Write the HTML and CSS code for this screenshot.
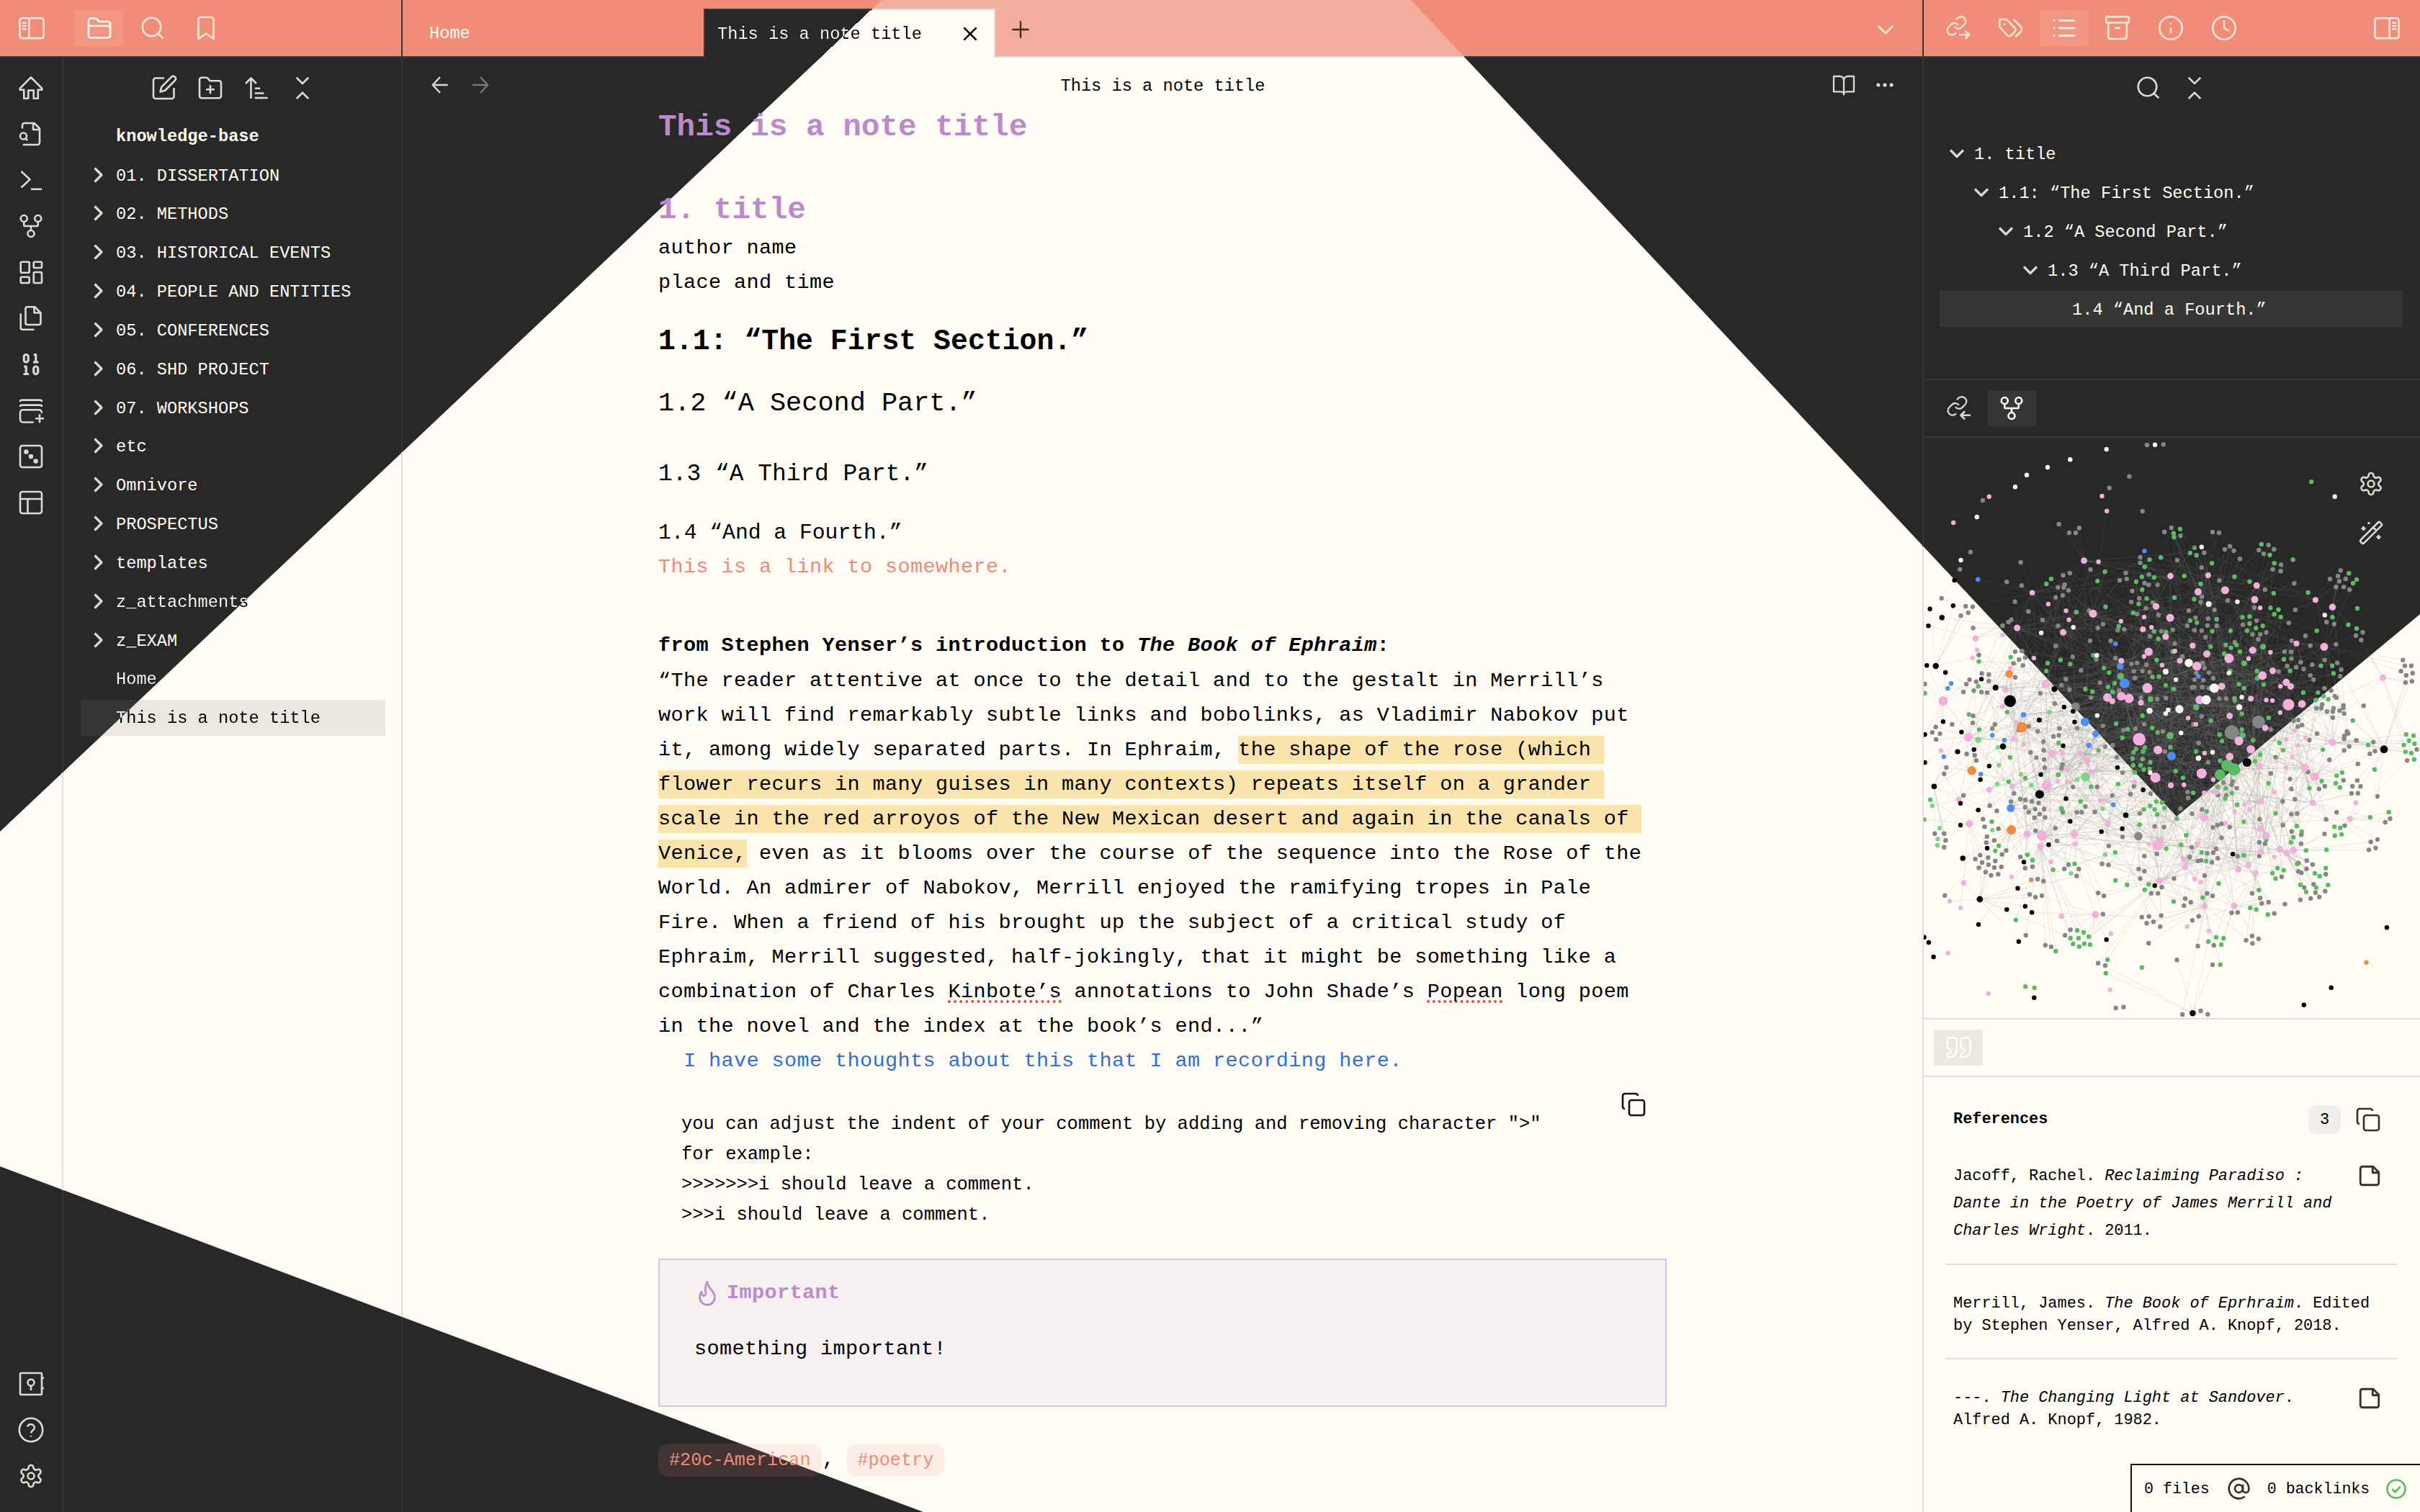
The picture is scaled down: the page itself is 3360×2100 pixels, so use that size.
FILE: index.html
```html
<!DOCTYPE html>
<html lang="en">
<head>
<meta charset="utf-8">
<title>This is a note title</title>
<link rel="stylesheet" href="styles.css">
</head>
<body>
<svg class="sprite" aria-hidden="true">
  <symbol id="panel-left" viewBox="0 0 24 24"><rect x="1" y="2.8" width="22" height="18.6" rx="2"/><path d="M9.6 2.8v18.6M3.2 7.2h4M3.2 10h4M3.2 12.8h4"/></symbol>
  <symbol id="panel-right" viewBox="0 0 24 24"><rect x="1" y="2.8" width="22" height="18.6" rx="2"/><path d="M14.4 2.8v18.6M16.8 7.2h4M16.8 10h4M16.8 12.8h4"/></symbol>
  <symbol id="folder" viewBox="0 0 24 24"><path d="M22 19a2 2 0 0 1-2 2H4a2 2 0 0 1-2-2V5a2 2 0 0 1 2-2h4.200c.7 0 1.300.3 1.700.9l.9 1.200c.4.600 1 .9 1.700.9H20a2 2 0 0 1 2 2zM2 10h20"/></symbol>
  <symbol id="search" viewBox="0 0 24 24"><circle cx="11" cy="11" r="8.500"/><path d="m21.500 21.500-4.500-4.500"/></symbol>
  <symbol id="bookmark" viewBox="0 0 24 24"><path d="m19 22-7-5-7 5V4a2 2 0 0 1 2-2h10a2 2 0 0 1 2 2z"/></symbol>
  <symbol id="home" viewBox="0 0 24 24"><path d="M12 2.200 1.800 12.500v1.300H5.500v8h4v-7.500h5v7.500h4v-8h3.700v-1.300z"/></symbol>
  <symbol id="file-search" viewBox="0 0 24 24"><path d="M4.500 22H18a2 2 0 0 0 2-2V7l-5-5H6a2 2 0 0 0-2 2v3M14 2v6h6M8.800 18l-1.600-1.600"/><circle cx="5" cy="14" r="3"/></symbol>
  <symbol id="terminal" viewBox="0 0 24 24"><path d="m3 19 8-7.500L3 4M12 20.500h10"/></symbol>
  <symbol id="fork" viewBox="0 0 24 24"><circle cx="12" cy="19" r="3"/><circle cx="5.500" cy="5" r="3"/><circle cx="18.500" cy="5" r="3"/><path d="M18.500 8v3c0 .6-.4 1-1 1h-11c-.6 0-1-.4-1-1V8M12 12v4"/></symbol>
  <symbol id="dashboard" viewBox="0 0 24 24"><rect x="2.500" y="2.500" width="8" height="10" rx="1"/><rect x="14.500" y="2.500" width="7.500" height="5.500" rx="1"/><rect x="14.500" y="12" width="7.500" height="10" rx="1"/><rect x="2.500" y="16.500" width="8" height="5.500" rx="1"/></symbol>
  <symbol id="files" viewBox="0 0 24 24"><path d="M15.500 1.500H8.600C7.700 1.500 7 2.200 7 3.100v13.300c0 .9.700 1.600 1.600 1.600h10.800c.9 0 1.600-.7 1.600-1.600V7zM2.500 7.600v13.300c0 .9.700 1.600 1.600 1.600H15M15 1.500V7h6"/></symbol>
  <symbol id="binary" viewBox="0 0 24 24"><rect x="14.500" y="14" width="4" height="7" rx="2"/><rect x="5.500" y="3" width="4" height="7" rx="2"/><path d="M5 21h5M14 10h5M5.500 14h2v7M14.500 3h2v7"/></symbol>
  <symbol id="stack-plus" viewBox="0 0 24 24"><path d="M2 4c0-1 .6-1.600 1.600-1.600h16.800c1 0 1.600.6 1.600 1.600M2 8.700c0-1 .6-1.600 1.600-1.600h16.800c1 0 1.600.6 1.600 1.600M14.500 23H4.500A2.500 2.500 0 0 1 2 20.500v-6.500a2.500 2.500 0 0 1 2.500-2.500h15A2.500 2.500 0 0 1 22 14v.5M20 15.500v8M16 19.500h8"/></symbol>
  <symbol id="dice" viewBox="0 0 24 24"><rect x="2" y="2" width="20" height="20" rx="2"/><g class="solid"><circle cx="7.600" cy="7.600" r="1.300"/><circle cx="12" cy="12" r="1.300"/><circle cx="16.400" cy="16.400" r="1.300"/></g></symbol>
  <symbol id="layout" viewBox="0 0 24 24"><rect x="2" y="2" width="20" height="20" rx="2"/><path d="M2 8.700h20M9 22V8.700"/></symbol>
  <symbol id="vault" viewBox="0 0 24 24"><rect x="2" y="2" width="20" height="20" rx="1"/><circle cx="12" cy="10.800" r="3"/><path d="M12 14v4M22 6.500h2M22 16h2"/></symbol>
  <symbol id="help" viewBox="0 0 24 24"><circle cx="12" cy="12" r="10.800"/><path d="M8.800 9a3.300 3.300 0 0 1 6.400 1c0 2.200-3.200 2.800-3.200 5M12 17.300v1"/></symbol>
  <symbol id="gear" viewBox="0 0 24 24"><path d="M12.220 2h-.44a2 2 0 0 0-2 2v.18a2 2 0 0 1-1 1.730l-.43.25a2 2 0 0 1-2 0l-.15-.08a2 2 0 0 0-2.730.73l-.22.38a2 2 0 0 0 .73 2.730l.15.1a2 2 0 0 1 1 1.720v.51a2 2 0 0 1-1 1.740l-.15.09a2 2 0 0 0-.73 2.730l.22.38a2 2 0 0 0 2.730.73l.15-.08a2 2 0 0 1 2 0l.43.25a2 2 0 0 1 1 1.730V20a2 2 0 0 0 2 2h.44a2 2 0 0 0 2-2v-.18a2 2 0 0 1 1-1.730l.43-.25a2 2 0 0 1 2 0l.15.08a2 2 0 0 0 2.730-.73l.22-.39a2 2 0 0 0-.73-2.730l-.15-.08a2 2 0 0 1-1-1.740v-.5a2 2 0 0 1 1-1.740l.15-.09a2 2 0 0 0 .73-2.730l-.22-.38a2 2 0 0 0-2.730-.73l-.15.08a2 2 0 0 1-2 0l-.43-.25a2 2 0 0 1-1-1.730V4a2 2 0 0 0-2-2z"/><circle cx="12" cy="12" r="3"/></symbol>
  <symbol id="edit" viewBox="0 0 24 24"><path d="M12 3H4a2 2 0 0 0-2 2v15a2 2 0 0 0 2 2h15a2 2 0 0 0 2-2v-8M18.700 1.900a2.300 2.300 0 0 1 3.300 3.300L12.700 14.500l-4.300 1.100 1.100-4.400z"/></symbol>
  <symbol id="folder-plus" viewBox="0 0 24 24"><path d="M22 19.500a2 2 0 0 1-2 2H4a2 2 0 0 1-2-2v-15a2 2 0 0 1 2-2h4.200c.7 0 1.300.3 1.700.9l.9 1.200c.4.600 1 .9 1.700.9H20a2 2 0 0 1 2 2zM12 9.500v8M8 13.500h8"/></symbol>
  <symbol id="sort" viewBox="0 0 24 24"><path d="m2 8 5-5 5 5M7 3v19M10.500 12.500h5M10.500 17h8.500M10.500 21.300h12"/></symbol>
  <symbol id="collapse" viewBox="0 0 24 24"><path d="m6.500 22 5.500-5.500 5.500 5.500M6.500 2.500 12 8l5.500-5.500"/></symbol>
  <symbol id="chevron-right" viewBox="0 0 24 24"><path d="m6.500 2.500 9.500 9.500-9.500 9.500"/></symbol>
  <symbol id="chevron-down" viewBox="0 0 24 24"><path d="m3 7.500 9 9 9-9"/></symbol>
  <symbol id="close" viewBox="0 0 24 24"><path d="M4 4l16 16M20 4 4 20"/></symbol>
  <symbol id="plus" viewBox="0 0 24 24"><path d="M12 2v20M2 12h20"/></symbol>
  <symbol id="arrow-left" viewBox="0 0 24 24"><path d="M22 12H2.500M12 2l-9.500 10L12 22"/></symbol>
  <symbol id="arrow-right" viewBox="0 0 24 24"><path d="M2 12h19.500M12 2l9.500 10L12 22"/></symbol>
  <symbol id="book" viewBox="0 0 24 24"><path d="M1.500 3h6.500a4 4 0 0 1 4 4v15a3 3 0 0 0-3-3H1.500zM22.500 3H16a4 4 0 0 0-4 4v15a3 3 0 0 1 3-3h7.500z"/></symbol>
  <symbol id="dots" viewBox="0 0 24 24"><g class="solid"><circle cx="3.500" cy="12" r="1.300"/><circle cx="12" cy="12" r="1.300"/><circle cx="20.500" cy="12" r="1.300"/></g></symbol>
  <symbol id="link-out" viewBox="0 0 24 24"><path transform="translate(.6 -.4) scale(.86)" d="M10 13a5 5 0 0 0 7.540.54l3-3a5 5 0 0 0-7.070-7.070l-1.720 1.710M14 11a5 5 0 0 0-7.540-.54l-3 3a5 5 0 0 0 7.070 7.070l1.200-1.200"/><path d="M13.500 18.200h9M19 14.500l3.700 3.700-3.700 3.700"/></symbol>
  <symbol id="link-in" viewBox="0 0 24 24"><path transform="translate(.6 -.4) scale(.86)" d="M10 13a5 5 0 0 0 7.540.54l3-3a5 5 0 0 0-7.070-7.070l-1.720 1.710M14 11a5 5 0 0 0-7.540-.54l-3 3a5 5 0 0 0 7.070 7.070l.4-.4"/><path d="M14.300 18.500h9M18 14.800l-3.700 3.700 3.700 3.700"/></symbol>
  <symbol id="tags" viewBox="0 0 24 24"><path d="m14.500 4 6.300 6.300a4 4 0 0 1 0 5.400L16.300 20M8.600 4.600A2 2 0 0 0 7.200 4H1.500v6.200a2 2 0 0 0 .6 1.400l6.800 7.300a2.300 2.300 0 0 0 3.200 0l3.600-3.800a2.300 2.300 0 0 0 0-3.200zM5.200 8.500h1.500"/></symbol>
  <symbol id="list" viewBox="0 0 24 24"><path d="M7 5h15M7 12h15M7 19h15M2 5h1.500M2 12h1.500M2 19h1.500"/></symbol>
  <symbol id="archive" viewBox="0 0 24 24"><rect x="1.500" y="1.500" width="21" height="5.500" rx="1"/><path d="M3.500 7v13a2 2 0 0 0 2 2h13a2 2 0 0 0 2-2V7M9.500 12h5"/></symbol>
  <symbol id="info" viewBox="0 0 24 24"><circle cx="12" cy="12" r="10.500"/><path d="M12 17v-5.500M12 7v1.500"/></symbol>
  <symbol id="clock" viewBox="0 0 24 24"><circle cx="12" cy="12" r="10.500"/><path d="M12 5v7l4.500 2.800"/></symbol>
  <symbol id="wand" viewBox="0 0 24 24"><path d="m21.600 3.600-1.300-1.300a1.200 1.200 0 0 0-1.700 0L2.400 18.600a1.200 1.200 0 0 0 0 1.700l1.300 1.300c.5.500 1.200.5 1.700 0L21.600 5.400a1.200 1.200 0 0 0 0-1.800M14 7l3 3M5 6v4M19 14v4M10 2v2M7 8H3M21 16h-4M11 3H9"/></symbol>
  <symbol id="quote" viewBox="0 0 24 24"><path d="M3 21c3.500 0 7.500-1 7.500-8V5c0-1.200-.8-2-2-2H4c-1.300 0-2 .8-2 2v6c0 1.300.8 2 2 2 1 0 1 0 1 1v1c0 1-1 2-2 2s-1 0-1 1v2c0 1 0 1 1 1M15.500 21c3.500 0 7.500-1 7.500-8V5c0-1.200-.8-2-2-2h-4.500c-1.300 0-2 .8-2 2v6c0 1.300.8 2 2 2 1 0 1 0 1 1v1c0 1-1 2-2 2s-1 0-1 1v2c0 1 0 1 1 1"/></symbol>
  <symbol id="copy" viewBox="0 0 24 24"><rect x="8" y="8" width="14" height="14" rx="2"/><path d="M4 16c-1.100 0-2-.9-2-2V4c0-1.100.9-2 2-2h10c1.100 0 2 .9 2 2"/></symbol>
  <symbol id="note" viewBox="0 0 24 24"><path d="M15.500 3H5a2 2 0 0 0-2 2v14a2 2 0 0 0 2 2h14a2 2 0 0 0 2-2V8.500zM15 3v6h6"/></symbol>
  <symbol id="flame" viewBox="0 0 24 24"><path d="M12 1.500c.3 3 1.300 4.700 3.300 7C17.600 11 19 12.800 19 16a7 6.800 0 0 1-14 0c0-2 .6-4 1.800-5.300.2 2 .5 3.800 2 3.800 1.600 0 2-1.400 1.700-3.200C10 8 10 4.500 12 1.500z"/></symbol>
  <symbol id="at" viewBox="0 0 24 24"><circle cx="12" cy="12" r="4"/><path d="M16 8v5a3 3 0 0 0 6 0v-1a10 10 0 1 0-4 8"/></symbol>
  <symbol id="check" viewBox="0 0 24 24"><circle cx="12" cy="12" r="10"/><path d="m7.500 12.200 3.200 3.200 5.800-5.800"/></symbol>
</svg>

<div class="app">
  <header class="topbar">
    <div class="top-left">
      <svg class="icon toggle"><use href="#panel-left"/></svg>
      <nav class="top-tabs">
        <span class="tool active"><svg class="icon"><use href="#folder"/></svg></span>
        <span class="tool"><svg class="icon"><use href="#search"/></svg></span>
        <span class="tool"><svg class="icon"><use href="#bookmark"/></svg></span>
      </nav>
    </div>
    <div class="top-center">
      <div class="tab">Home</div>
      <div class="tab tab-active"><span class="split">This is a note title</span><svg class="icon tab-close"><use href="#close"/></svg></div>
      <svg class="icon new-tab"><use href="#plus"/></svg>
      <svg class="icon tab-menu"><use href="#chevron-down"/></svg>
    </div>
    <div class="top-right">
      <nav class="top-tabs">
        <span class="tool"><svg class="icon"><use href="#link-out"/></svg></span>
        <span class="tool"><svg class="icon"><use href="#tags"/></svg></span>
        <span class="tool active"><svg class="icon"><use href="#list"/></svg></span>
        <span class="tool"><svg class="icon"><use href="#archive"/></svg></span>
        <span class="tool"><svg class="icon"><use href="#info"/></svg></span>
        <span class="tool"><svg class="icon"><use href="#clock"/></svg></span>
      </nav>
      <svg class="icon toggle"><use href="#panel-right"/></svg>
    </div>
  </header>

  <div class="workspace">
    <aside class="ribbon">
      <div class="ribbon-group">
        <svg class="icon"><use href="#home"/></svg>
        <svg class="icon"><use href="#file-search"/></svg>
        <svg class="icon"><use href="#terminal"/></svg>
        <svg class="icon"><use href="#fork"/></svg>
        <svg class="icon"><use href="#dashboard"/></svg>
        <svg class="icon"><use href="#files"/></svg>
        <svg class="icon binary"><use href="#binary"/></svg>
        <svg class="icon"><use href="#stack-plus"/></svg>
        <svg class="icon"><use href="#dice"/></svg>
        <svg class="icon"><use href="#layout"/></svg>
      </div>
      <div class="ribbon-group">
        <svg class="icon"><use href="#vault"/></svg>
        <svg class="icon"><use href="#help"/></svg>
        <svg class="icon"><use href="#gear"/></svg>
      </div>
    </aside>
    <div class="rule rule-ribbon"></div>

    <aside class="explorer">
      <div class="explorer-tools">
        <svg class="icon"><use href="#edit"/></svg>
        <svg class="icon"><use href="#folder-plus"/></svg>
        <svg class="icon"><use href="#sort"/></svg>
        <svg class="icon"><use href="#collapse"/></svg>
      </div>
      <div class="vault-name">knowledge-base</div>
      <div class="tree">
        <div class="row"><svg class="chev"><use href="#chevron-right"/></svg>01. DISSERTATION</div>
        <div class="row"><svg class="chev"><use href="#chevron-right"/></svg>02. METHODS</div>
        <div class="row"><svg class="chev"><use href="#chevron-right"/></svg>03. HISTORICAL EVENTS</div>
        <div class="row"><svg class="chev"><use href="#chevron-right"/></svg>04. PEOPLE AND ENTITIES</div>
        <div class="row"><svg class="chev"><use href="#chevron-right"/></svg>05. CONFERENCES</div>
        <div class="row"><svg class="chev"><use href="#chevron-right"/></svg>06. SHD PROJECT</div>
        <div class="row"><svg class="chev"><use href="#chevron-right"/></svg>07. WORKSHOPS</div>
        <div class="row"><svg class="chev"><use href="#chevron-right"/></svg>etc</div>
        <div class="row"><svg class="chev"><use href="#chevron-right"/></svg>Omnivore</div>
        <div class="row"><svg class="chev"><use href="#chevron-right"/></svg>PROSPECTUS</div>
        <div class="row"><svg class="chev"><use href="#chevron-right"/></svg>templates</div>
        <div class="row"><svg class="chev"><use href="#chevron-right"/></svg><span class="split">z_attachments</span></div>
        <div class="row"><svg class="chev"><use href="#chevron-right"/></svg>z_EXAM</div>
        <div class="row leaf"><span class="split">Home</span></div>
        <div class="row leaf selected"><span class="split">This is a note title</span></div>
      </div>
    </aside>
    <div class="rule rule-explorer"></div>

    <main class="editor">
      <div class="view-header">
        <div class="view-nav"><svg class="icon small"><use href="#arrow-left"/></svg><svg class="icon small faded"><use href="#arrow-right"/></svg></div>
        <div class="view-title">This is a note title</div>
        <div class="view-actions"><svg class="icon book"><use href="#book"/></svg><svg class="icon small"><use href="#dots"/></svg></div>
      </div>
      <article class="note">
        <h1 class="note-title">This is a note title</h1>
        <h1 class="h1">1. title</h1>
        <p>author name<br>place and time</p>
        <h2 class="h2">1.1: “The First Section.”</h2>
        <h3 class="h3">1.2 “A Second Part.”</h3>
        <h4 class="h4">1.3 “A Third Part.”</h4>
        <h5 class="h5">1.4 “And a Fourth.”</h5>
        <p><a class="link">This is a link to somewhere.</a></p>
        <p class="lead">from Stephen Yenser’s introduction to <i>The Book of Ephraim</i>:</p>
        <p>“The reader attentive at once to the detail and to the gestalt in Merrill’s<br>work will find remarkably subtle links and bobolinks, as Vladimir Nabokov put<br>it, among widely separated parts. In Ephraim, <mark>the shape of the rose (which&nbsp;<br>flower recurs in many guises in many contexts) repeats itself on a grander&nbsp;<br>scale in the red arroyos of the New Mexican desert and again in the canals of&nbsp;<br>Venice,</mark> even as it blooms over the course of the sequence into the Rose of the<br>World. An admirer of Nabokov, Merrill enjoyed the ramifying tropes in Pale<br>Fire. When a friend of his brought up the subject of a critical study of<br>Ephraim, Merrill suggested, half-jokingly, that it might be something like a<br>combination of Charles <span class="typo">Kinbote’s</span> annotations to John Shade’s <span class="typo">Popean</span> long poem<br>in the novel and the index at the book’s end...”</p>
        <p class="comment">I have some thoughts about this that I am recording here.</p>
        <div class="code">
          <pre>you can adjust the indent of your comment by adding and removing character "&gt;"
for example:
&gt;&gt;&gt;&gt;&gt;&gt;&gt;i should leave a comment.
&gt;&gt;&gt;i should leave a comment.</pre>
          <svg class="icon code-copy"><use href="#copy"/></svg>
        </div>
        <section class="callout">
          <div class="callout-title"><svg class="icon"><use href="#flame"/></svg>Important</div>
          <div class="callout-body">something important!</div>
        </section>
        <div class="tags"><span class="tag">#20c-American</span><span class="comma">,</span><span class="tag">#poetry</span></div>
      </article>
    </main>
    <div class="rule rule-right"></div>

    <aside class="side">
      <section class="outline">
        <div class="outline-tools"><svg class="icon"><use href="#search"/></svg><svg class="icon"><use href="#collapse"/></svg></div>
        <div class="outline-tree">
          <div class="oline lv1"><svg class="chev"><use href="#chevron-down"/></svg>1. title</div>
          <div class="oline lv2"><svg class="chev"><use href="#chevron-down"/></svg>1.1: “The First Section.”</div>
          <div class="oline lv3"><svg class="chev"><use href="#chevron-down"/></svg>1.2 “A Second Part.”</div>
          <div class="oline lv4"><svg class="chev"><use href="#chevron-down"/></svg>1.3 “A Third Part.”</div>
          <div class="oline lv5 selected">1.4 “And a Fourth.”</div>
        </div>
      </section>
      <nav class="pane-tabs dark">
        <span class="tool"><svg class="icon"><use href="#link-in"/></svg></span>
        <span class="tool active"><svg class="icon"><use href="#fork"/></svg></span>
      </nav>
      <section class="graph">
        <svg id="graph" width="689" height="806" viewBox="0 0 689 806"></svg>
        <div class="graph-controls"><svg class="icon"><use href="#gear"/></svg><svg class="icon"><use href="#wand"/></svg></div>
      </section>
      <nav class="pane-tabs light">
        <span class="tool active"><svg class="icon"><use href="#quote"/></svg></span>
      </nav>
      <section class="refs">
        <div class="refs-head"><b>References</b><span class="count">3</span><svg class="icon"><use href="#copy"/></svg></div>
        <div class="ref roomy"><p>Jacoff, Rachel. <i>Reclaiming Paradiso :<br>Dante in the Poetry of James Merrill and<br>Charles Wright</i>. 2011.</p><svg class="icon"><use href="#note"/></svg></div>
        <div class="ref"><p>Merrill, James. <i>The Book of Eprhraim</i>. Edited<br>by Stephen Yenser, Alfred A. Knopf, 2018.</p></div>
        <div class="ref"><p>---. <i>The Changing Light at Sandover</i>.<br>Alfred A. Knopf, 1982.</p><svg class="icon"><use href="#note"/></svg></div>
      </section>
    </aside>
  </div>
  <footer class="status"><span>0 files</span><svg class="icon"><use href="#at"/></svg><span>0 backlinks</span><svg class="icon ok"><use href="#check"/></svg></footer>
</div>
<script src="graph.js"></script>
</body>
</html>
```
FILE: styles.css
```css
:root {
  --dark: #282828;
  --light: #fffcf5;
  --line-dark: #373737;
  --line-light: #dfdfdd;
  --coral: #f18c78;
  --coral-light: #f3ad9f;
  --purple: #bc8acb;
  --icon: #dadad2;
  --shade: rgba(128, 128, 128, .16);
  --accent-icon: #fde4da;
}

* { box-sizing: border-box; }

body {
  margin: 0;
  background: var(--dark);
  font-family: "Liberation Mono", "Courier New", monospace;
  font-size: 23.67px;
  color: var(--light);
  white-space: nowrap;
}

h1, h2, h3, h4, h5, p, pre { margin: 0; font-weight: 400; font-size: inherit; }
pre { font-family: inherit; }

.sprite { position: absolute; width: 0; height: 0; }

.app {
  position: relative;
  display: flex;
  flex-direction: column;
  width: 3360px;
  height: 2100px;
  overflow: hidden;
}

/* Light theme area behind the panes */
.app::before {
  content: "";
  position: absolute;
  inset: 0;
  background: var(--light);
  clip-path: polygon(1224px 0, 1959px 0, 3022px 1134px, 3360px 853px, 3360px 2100px, 1282px 2100px, 0 1620px, 0 1155px);
}

.icon, .chev {
  flex: none;
  width: 36px;
  height: 36px;
  fill: none;
  stroke: var(--icon);
  stroke-width: 1.75;
  stroke-linecap: butt;
  stroke-linejoin: round;
  overflow: visible;
}
.icon { display: block; }
.chev { width: 24px; height: 24px; stroke-width: 3.2; }
.solid { fill: var(--icon); }

/* Text that crosses the theme edge takes both colours */
.split {
  background: linear-gradient(136.66deg, var(--light) 840px, #000 840px) fixed;
  -webkit-background-clip: text;
  background-clip: text;
  color: transparent;
}

/* Top bar */
.topbar {
  position: relative;
  display: flex;
  height: 80px;
  flex: none;
  background:
    linear-gradient(to right, var(--line-dark) 1140px, var(--line-light) 1140px 2033px, var(--line-dark) 2033px) bottom / 100% 2px no-repeat,
    var(--coral);
}
.topbar::before {
  content: "";
  position: absolute;
  inset: 0 0 2px;
  background: var(--coral-light);
  clip-path: polygon(1224px 0, 1959px 0, 2032px 78px, 1141px 78px);
}
.topbar .icon { stroke: var(--accent-icon); }
.top-left, .top-center, .top-right { position: relative; display: flex; }
.top-left { width: 559px; padding: 14px 0 0 26px; border-right: 2px solid var(--line-dark); }
.top-center { width: 2112px; padding: 12px 33px 0 0; border-right: 2px solid var(--line-dark); }
.top-right { width: 689px; padding: 14px 28px 0 13px; justify-content: space-between; }
.toggle { margin-top: 7px; }
.top-tabs { display: flex; gap: 6px; }
.top-left .top-tabs { margin-left: 42px; }

.tool {
  display: flex;
  align-items: center;
  justify-content: center;
  width: 68px;
  height: 50px;
}
.tool.active { background: var(--shade); }
.topbar .tool.active { background: rgba(255, 255, 255, .08); }
.tool.active .icon, .topbar .tool.active .icon { stroke: var(--light); }

.tab {
  display: flex;
  align-items: center;
  width: 418px;
  height: 68px;
  padding: 0 0 0 37px;
}
.tab-active {
  justify-content: space-between;
  width: 405px;
  padding: 0 20px 0 17px;
  background: linear-gradient(136.66deg, var(--dark) 840px, var(--light) 840px) fixed;
  border: 2px solid var(--line-light);
  border-bottom: 0;
  border-image: linear-gradient(to right, var(--line-dark) 234px, var(--line-light) 234px) 2;
}
.topbar .tab-close { width: 26px; height: 26px; stroke: #000; stroke-width: 2.4; }
.topbar .new-tab { width: 28px; height: 28px; margin: 15px 0 0 21px; stroke: #3a2a20; stroke-width: 2; }
.topbar .tab-menu { width: 28px; height: 28px; margin: 15px 4px 0 auto; stroke-width: 2.2; }

/* Workspace columns */
.workspace { position: relative; display: flex; height: 2020px; }
.rule { flex: none; width: 2px; }
.rule-ribbon { background: linear-gradient(var(--line-dark) 993px, var(--line-light) 993px 1573px, var(--line-dark) 1573px); }
.rule-explorer { background: linear-gradient(var(--line-dark) 548px, var(--line-light) 548px 1749px, var(--line-dark) 1749px); }
.rule-right { background: linear-gradient(var(--line-dark) 679px, var(--line-light) 679px); }

.ribbon {
  display: flex;
  flex-direction: column;
  justify-content: space-between;
  width: 86px;
  padding: 24px 25px 32px;
}
.ribbon-group { display: flex; flex-direction: column; gap: 28px; }
.ribbon .binary { stroke-width: 2.1; }

.explorer { width: 469px; padding: 24px 22px 0 24px; }
.explorer-tools { display: flex; gap: 28px; padding-left: 98px; }
.vault-name { margin-top: 24px; padding-left: 49px; line-height: 52px; font-weight: 700; }
.tree { display: flex; flex-direction: column; gap: 3.85px; margin-top: 2px; }
.row {
  display: flex;
  align-items: center;
  height: 50px;
  padding: 3px 0 0 12px;
  line-height: 50px;
}
.row .chev { margin: -4px 12px 0 1px; }
.row.leaf { padding-left: 49px; }
.selected { background: var(--shade); }

/* Editor */
.editor { width: 2110px; color: #000; }
.view-header {
  display: grid;
  grid-template-columns: 1fr auto 1fr;
  align-items: center;
  height: 68px;
  padding: 8px 38px 0 39px;
}
.view-nav, .view-actions { display: flex; align-items: center; gap: 30px; }
.view-actions { justify-content: flex-end; }
.small { width: 26px; height: 26px; stroke-width: 2.2; }
.view-actions .small { width: 28px; }
.faded { opacity: .45; }
.book { width: 32px; height: 32px; margin-right: -3px; }
.view-title { padding-top: 3px; }

.note { width: 1755px; padding-left: 355px; font-size: 28.5px; letter-spacing: .4px; line-height: 48px; }
.note-title, .h1 { color: var(--purple); font-size: 42.7px; font-weight: 700; line-height: 58px; letter-spacing: 0; }
.h1 { margin-top: 56px; line-height: 59px; }
.h2 { margin-top: 30px; font-size: 39.8px; font-weight: 700; line-height: 56px; letter-spacing: 0; }
.h3 { margin-top: 31px; font-size: 36.9px; line-height: 52px; letter-spacing: 0; }
.h4 { margin-top: 49px; font-size: 32.9px; line-height: 48px; letter-spacing: 0; }
.h5 { margin-top: 33px; font-size: 29.7px; letter-spacing: 0; }
.link { color: #f08a77; }
.lead { margin-top: 61px; font-weight: 700; }
.lead + p { margin-top: 1px; }
mark { padding: 3px 0; background: #fbe4ab; color: inherit; }
.typo {
  text-decoration: underline dotted #e8483f 4px;
  text-underline-offset: 4px;
  text-decoration-skip-ink: none;
}
.comment { padding-left: 35px; color: #2f6fd6; }

.code {
  display: flex;
  align-items: flex-start;
  justify-content: space-between;
  margin-top: 17px;
  padding: 0 28px 0 32px;
  font-size: 25.5px;
  letter-spacing: 0;
  line-height: 41.9px;
}
.code pre { padding-top: 26px; }
.code-copy { stroke: #111; margin-top: 1px; }

.callout {
  height: 206px;
  margin-top: 39px;
  padding: 22px 48px;
  background: #f6f0f0;
  border: 2px solid #dcc2e2;
}
.callout-title { display: flex; align-items: center; gap: 9px; color: var(--purple); font-weight: 700; }
.callout-title .icon { stroke: var(--purple); }
.callout-body { margin-top: 30px; }

.tags { display: flex; align-items: center; margin-top: 50px; font-size: 25.2px; letter-spacing: 0; }
.tag { padding: 0 15px; height: 46px; border-radius: 14px; background: rgba(241, 140, 120, .13); color: #f08a77; line-height: 48px; }
.comma { width: 35px; padding-left: 1px; font-size: 29px; }

/* Right column */
.side { width: 689px; }
.outline { height: 448px; padding: 24px 24px 0 22px; border-bottom: 2px solid var(--line-dark); }
.outline-tools { display: flex; gap: 28px; padding-left: 272px; }
.outline-tree { display: flex; flex-direction: column; gap: 4px; margin-top: 48px; }
.oline { display: flex; align-items: center; height: 50px; padding-top: 3px; }
.oline .chev { margin-right: 12px; margin-top: -3px; }
.lv1 { padding-left: 12px; }
.lv2 { padding-left: 46px; }
.lv3 { padding-left: 80px; }
.lv4 { padding-left: 114px; }
.lv5 { padding-left: 184px; }

.pane-tabs { display: flex; height: 80px; padding: 14px 14px 0; }
.pane-tabs.dark { border-bottom: 2px solid var(--line-dark); }
.pane-tabs.light { height: 82px; border-top: 2px solid var(--line-light); border-bottom: 2px solid var(--line-light); }
.pane-tabs.dark .tool { margin-right: 6px; }

.graph { position: relative; height: 806px; overflow: hidden; }
.graph svg { display: block; }
.graph-controls { position: absolute; top: 46px; right: 50px; display: flex; flex-direction: column; gap: 32px; }

.refs { padding: 38px 32px 0 30px; color: #000; font-size: 21.9px; }
.refs .icon { stroke: #35332a; }
.refs-head { display: flex; align-items: center; padding: 0 22px 0 11px; height: 41px; }
.refs-head b { flex: 1; }
.count { width: 45px; height: 40px; margin-right: 20px; border-radius: 12px; background: #efeeea; line-height: 42px; text-align: center; }
.ref {
  display: flex;
  justify-content: space-between;
  height: 131px;
  padding: 38px 22px 0 11px;
  border-bottom: 2px solid var(--line-light);
  line-height: 31.2px;
}
.ref.roomy { height: 182px; padding-top: 40px; line-height: 37.9px; }
.ref:last-child { border-bottom: 0; }
.ref .icon { width: 34px; height: 34px; margin: -1px -1px 0 0; stroke-width: 2; }
.ref.roomy .icon { margin-top: 1px; }

.status {
  position: absolute;
  right: 0;
  bottom: 0;
  display: flex;
  align-items: center;
  width: 402px;
  height: 67px;
  padding-left: 17px;
  border: solid #16140c;
  border-width: 2px 0 0 2px;
  background: var(--light);
  color: #000;
  font-size: 21.6px;
}
.status .icon { width: 33px; height: 33px; margin: 0 23px 0 24px; stroke: #35332a; stroke-width: 2; }
.status .ok { width: 30px; height: 30px; margin: 0 0 0 22px; stroke: #55b75c; }
```
FILE: graph.js
```js
// Node positions as "x,y" or "x,y,radius"; the lower group starts 1320 units down.
const groups = [
  { top: 0, nodes: {
    gray: "719,354 770,352 664,485 602,533 208,585 705,630 445,684 508,700 477,720 497,720 795,699 773,716 823,732 923,717 943,720 867,782 897,803 961,789 977,776 989,794 1067,792 1097,771 1114,789 1082,808 813,834 1008,829 889,865 698,822 698,845 170,800 137,872 326,843 543,873 479,888 458,897 283,925 329,940 463,936 442,947 460,948 475,960 457,981 435,989 308,1007 653,887 656,912 634,918 725,894 711,929 724,937 752,937 673,962 695,993 737,1011 670,1008 716,1034 755,1062 688,1059 944,918 890,986 886,1009 970,1002 929,1041 1086,957 1177,931 1136,853 1110,872 1135,880 1321,877 1288,913 1313,900 1337,912 1317,922 1307,946 1331,946 1349,957 1053,1032 1180,1041 849,1044 870,1074 844,1107 909,1078 907,1106 936,1108 867,1126 889,1128 1017,1103 1060,1086 1090,1135 1047,1143 1071,1143 1065,1164 901,1155 992,1176 1160,1096 1212,1149 1169,1170 1277,1092 1301,1100 1390,1135 1369,1148 1385,1167 1227,1190 1307,1185 350,1048 394,1083 297,1082 270,1107 288,1092 442,1108 539,1045 582,1101 566,1117 542,1170 606,1170 628,1126 648,1122 435,1192 488,1237 799,1124 728,1151 763,1130 805,1181 621,1242 561,1248 829,1235 514,1293 467,1329 1147,1215 1167,1216 1168,1244 1272,1250 1311,1262 1197,1259 1183,1280 1155,1275 1206,1288 1233,1270 1323,1290 1320,1318 1227,1314 671,1267 688,1262 717,1270 705,1296 678,1297 727,1300 681,1325 912,1303 892,1262 898,1283 872,1305 867,1332 894,1334 925,1326 1128,1298 1515,1250 1521,1274 1541,1274 1509,1297 1545,1305 1525,1314 80,993 155,1026 177,1028 163,1053 140,1066 178,1117 196,1229 309,1215 330,1213 321,1248 340,1240 304,1264 333,1273 309,1322 205,1306 227,1310",
    green: "1230,508 822,704 802,722 803,738 1075,768 1101,812 1115,847 1173,832 853,804 873,814 921,847 762,823 727,832 712,862 588,882 565,921 421,912 406,933 703,904 741,906 685,924 704,957 718,994 693,1016 676,1054 590,1028 499,1051 835,900 804,990 866,997 886,933 991,903 1038,923 1113,972 1220,969 1347,889 1371,915 1360,930 1373,1035 1103,1033 1128,1040 1115,1059 1135,1071 1016,1072 1038,1069 1038,1098 1058,1117 1079,1108 1030,1128 979,1128 936,1080 874,1094 853,1086 922,1130 741,1131 778,1133 754,1162 631,1109 799,1215 964,1187 997,1187 980,1199 917,1194 959,1224 1008,1215 1080,1195,4 1021,1264,4 1247,1128 1345,1103 1371,1119 1296,1072 1145,1247 1164,1295 1260,1274 1295,1274 1299,1306 552,1230 450,1250 480,1267 410,1263 406,1296 749,1250 585,1283 601,1303 736,1321 756,1319 637,1318,4.8 978,1296 1061,1296 1062,1326 295,1238 196,1256",
    pink: "228,569 117,678 579,567 594,629 523,836,4.4 568,841 792,900,4.4 909,897,4 878,966,5 962,959,5.5 1060,940,4.5 1054,998,5 1071,1033 1243,1000,4 1296,1030,4.7 362,970,3.8 412,1017 467,1045 476,1082 551,1057,5.5 747,1027,4.7 791,1074,5.5 710,1071 638,1088 315,1116,4.5 458,1135,4.5 706,1122,4 733,1114 777,1153,4.5 861,1190,4.2 905,1225,5 974,1243,6.5 1048,1210,5 1103,1218 1035,1244 1184,1181,4 1270,1195,5.5 724,1216,5.7 710,1235 806,1213 821,1253,4 874,1276,6.3 766,1271 639,1253,4 367,1242 186,1160,4.3 191,1208 176,1241 270,1146 294,1284 1110,1295,4.5 1078,1315,6 1453,1324,4.5",
    white: "744,353 593,372 480,415 410,447 345,479 309,529 190,654 1303,569 889,779 140,834 911,1017,4 1000,1007 490,1114 390,1137 1272,1063 563,1231 849,1262,5.7 777,1298,4 974,1304",
    black: "120,918 116,1024 44,1037 81,1073,3.7 39,1108 34,1273 62,1275,4.2 92,1302",
    blue: "711,796 193,914 621,1183 635,1276,4.5 879,1318",
    orange: "290,1308,5.3"
  } },
  { top: 1320, nodes: {
    gray: "28,30 167,12 188,20 157,31 148,63 180,58 204,64 222,66 227,18 387,69 466,9 478,53 453,35 432,112 178,163 113,198 177,192 246,198 238,215 51,232 75,237 62,209 63,261 320,222 351,206 379,227 447,215 502,214 428,248 445,244 397,270 398,306 357,315 375,337 399,344 401,379 456,366 453,382 158,322 183,327 188,349 95,378 88,404 148,494 230,537 296,520 305,486 325,509 341,513 361,519 382,526 340,544 371,551 399,551 351,564 385,572 369,587 402,586 252,559 209,593 214,625 257,633 221,666 219,691 244,682 59,653 88,653 93,682 88,710 281,724 200,743 185,760 225,753 268,740 206,774 247,767 226,783 196,796 244,795 266,792 217,814 234,827 256,823 325,751 340,797 363,791 372,641 434,631 439,684 457,564 501,565 516,564 527,541 557,563 489,459 564,458 611,494 668,489 612,286 589,291 625,335 643,400 678,456 582,205 730,487 697,569 743,623 772,626 643,667 600,705 711,747 750,738 579,779 599,784 475,782 462,800 507,801 500,830 379,843 397,851 354,907 372,918 392,912 90,911 342,1077 567,901 585,913 582,989 481,1054 464,1077 403,1118 421,1125 567,1193 589,1203 622,1380 646,1376 724,1110 812,1180 760,1041 739,1021 718,1027 725,998 703,1001 763,995 732,902 753,902 765,877 698,841 693,801 711,810 803,841 898,828 858,710 852,751 877,767 887,765 906,735 925,733 934,717 939,756 921,773 951,671 924,628 938,618 951,613 976,626 890,553 859,571 823,549 847,505 845,480 906,902 923,913 838,924 855,940 834,953 880,998 860,1015 877,1122 927,1119 923,1200 982,983 1001,982 1046,902 1071,922 1076,944 1097,939 1148,947 1115,986 1046,1080 1027,1098 1066,1092 1047,1111 829,1407 886,1392 908,1406 1068,747 1001,748 1068,690 1086,695 1069,593 1142,618 1169,644 1186,570 1168,572 1179,510 1168,467 1164,426 1104,403 1119,335 1141,520 1198,695 1199,658 1216,766 1234,782 1215,800 1199,817 1190,811 1190,776 1275,823 1237,865 1208,878 1273,893 1243,899 1255,917 1228,923 1196,929 1138,833 1271,655 1276,594 1334,620 1309,565 1330,431 1373,432 1358,456 1383,457 1355,486 1375,485 1436,498 1436,678 1415,688 1430,713 1409,721 1475,591 1460,606 1272,456 1254,467 1220,396 1286,346 1332,307 1348,290 1375,363 1412,321 1428,310 1423,272 1370,265 1332,259 1341,228 1345,236 1333,246 1224,264 1175,183 1190,180 1201,201 1188,208 1248,237 1297,170 1332,153 1330,119 1330,130 1393,121 1264,115 1261,130 1299,131 1297,145 1318,141 1279,145 1308,87 1292,58 1303,80 1271,48 1246,131 1523,24 1543,19 1528,349 1558,303 545,87 646,222 700,87 710,197 768,227 683,216 880,275 863,198 889,165 909,356 1104,220 1012,239 944,91 965,91 992,100 751,92 778,89 632,56 573,25 682,5 866,43 859,44 891,43 912,48 1237,12 775,311 985,436 957,440 940,493 998,464 965,494 982,450 1066,188,9 983,232,10 692,664,5.8 497,124,5.8",
    green: "28,68 194,40 527,51 549,62 598,42 612,63 618,27 777,35 802,52 730,93,4 1005,31 1021,47 1082,32 1251,66 1268,81 1283,94 1205,66 1244,97 991,90 165,157 284,147 197,220 293,336 444,275 340,422 289,437 443,408,3.6 545,458 512,519 453,549,3.5 629,447 568,307 45,512 26,595 236,604 258,704 247,725 347,742 363,764 427,804 494,779 620,732 621,848 657,867 311,1013 341,1291 369,1296 435,1143 502,1057 522,1065 538,1083 481,1089 506,1089 489,1113 524,1112 542,1116 508,1124 596,1179 591,1235 703,1211 724,865 712,887 802,937 892,920 942,861 1067,889 1040,963 1059,970 1095,991 934,1085 957,1090 910,1103 950,1116 947,1199 889,732 903,767 825,700 841,660 779,716 696,616 748,520 766,524 729,538 743,553 773,547 751,574 709,553 812,591 904,561 1020,604 863,484 939,458 964,465 983,485 962,507 999,533 831,421 808,393 681,398 705,343 674,341 699,369 676,369 729,356 727,384 709,386 712,295 685,300 707,312 677,314 642,254 659,219 623,196 735,213 752,232 791,245,5 792,293 705,162 872,127,4.2 918,182 945,241 952,268 872,311 946,350 1014,154 1097,171 1014,220 1017,244,4 1049,265 1071,325 1055,352 1119,569 1131,275 1142,306 1266,304 1359,182 1407,284 1427,386 1326,399 1309,412 1262,435 1306,443 1319,461 1224,464 1097,444 1302,625 1320,629 1303,662 1324,657 1413,586 1471,564 1185,622 1200,645 1174,669 1167,690 1090,679 1214,724 1277,721 1186,780 1275,797 1241,819 1256,831 1125,797 1144,806 1109,818 1119,841 1196,867 1245,878 1214,896 1282,868 1020,744 1525,240 1548,245 1534,266 1518,284 1551,279 1523,313 1541,318 1550,344 968,369,8 990,386,8.5 946,408,7.4",
    mint: "416,147 194,263,4.4 255,294 258,368 327,406 359,452 253,447 502,428 528,417,6.4 581,550 51,538 74,631 68,676 67,702 238,639 483,819 589,741",
    pink: "404,30,6 279,52,4.5 85,101,6.6 270,124,3.7 313,191 163,252,6 303,259 334,283 78,307 424,319,5 456,321 511,319,3.8 533,350,5 470,387,4.3 545,396,3.8 407,452,7 441,435 470,439 300,457,3.8 228,471,3.9 134,512,3.9 575,517,4 166,612,5 346,656,5 392,661,7.2 387,706,4.3 492,655,5.2 495,697 597,612,4.2 420,771 149,859,3.7 298,834 105,935 139,963 453,998,3.6 559,991,5 607,1070 604,1304 226,1320 100,1151 680,438,3.7 720,47,7 596,86,6 611,102,4 639,81,6 663,90,6.5 700,108,4 883,97,6 951,40,5 1042,91,4 1090,97 1109,99 1152,23,5 1166,40,4.5 1134,40 1159,116,8 1201,113,5.4 1133,149 847,172 871,198 976,163,4.4 1087,213,4.4 1005,267,6.2 1042,302,5.8 976,333,5.4 898,318 889,403,7 925,428 834,450 793,452,4 745,420,7 753,305,6 695,260,8.8 897,484 934,480,4 897,586,6 1073,518,4.6 1022,532 1038,553 992,562 964,610 1115,480 1070,371,4 1151,379 1171,335 1210,379,5.6 1240,416,6 1152,261 1189,286 1212,254 1178,224 1296,274,5 1234,525,4.3 1368,525,3.5 1350,592,4.2 1071,633,4 1089,662,5.4 1132,718,4.5 1174,723,5 1154,736,4.2 1115,751 1075,730,4 1034,785,4 1003,802,4.5 1057,819,4.2 876,697,3.7 867,843 886,855 898,956,4 990,955,4.6 844,1041 911,1059 834,763,4 838,793,4 758,850,4.5 752,702,7.3 762,685,4 725,697",
    white: "809,12 928,47,6.5 903,96,6.5 820,135,5.7 727,142,4.2 1006,127,4.2 1014,85 785,138 777,153 564,161 825,234 923,314 879,339,3.8 729,400",
    black: "204,10 248,45,4 431,51,4 293,101,8.2 85,187 142,230 28,241 384,180,3.6 461,126 489,144 494,188 130,312,3.6 181,303 271,290,4.3 458,287 28,357 228,372 389,407 201,428 57,457,3.8 385,490,6 467,508 139,527 194,555 627,378 707,471 653,577,3.8 642,633 577,645 480,602 139,618 413,700 222,714 146,756,3.7 336,772 317,881 199,927,4.4 283,970 340,956 361,982 195,1032 40,1107 55,1167 26,1085 320,1103 368,1337 593,1095 743,870 986,739 861,1402,4.2 1030,357,6 1456,302,5.4 1465,1045 1292,1295 1207,1367",
    blue: "110,28 99,48 649,27,7 335,158,3.8 238,244 275,264 87,333 202,406 526,188,6 559,238,4.7 538,286,3.8 795,330,6 295,547,5.5 614,533",
    orange: "330,210,7.3 174,391,6.2 297,638,6.6 1401,1190",
    coral: "359,846"
  } }
];

const colors = {
  gray: "#868683", green: "#5bbb63", mint: "#7fd48b", pink: "#f4b0dc", white: "#f8f5ee",
  black: "#000", blue: "#4f8cf7", orange: "#f28c3f", coral: "#e9806b"
};

const svg = document.getElementById("graph");
const NS = "http://www.w3.org/2000/svg";
const nodes = [];

for (const group of groups) {
  for (const [kind, list] of Object.entries(group.nodes)) {
    for (const item of list.split(" ")) {
      const [x, y, r = 3.2] = item.split(",").map(Number);
      nodes.push({ kind, r, x: x * 0.4464 - 11, y: (y + group.top) / 3 - 108 });
    }
  }
}

let seed = 7;
const random = () => (seed = (seed * 16807) % 2147483647) / 2147483647;
const distance = (a, b) => Math.hypot(a.x - b.x, a.y - b.y);
const central = n => Math.hypot(n.x - 330, n.y - 400) < 270;
const hubs = nodes.filter(n => n.r >= 3.8);
let d = "";
const edge = (a, b) => { d += `M${a.x.toFixed(1)} ${a.y.toFixed(1)}L${b.x.toFixed(1)} ${b.y.toFixed(1)}`; };

// Every small node joins its closest hub; central ones also reach a distant hub.
for (const n of nodes) {
  if (n.r >= 3.8) continue;
  const near = hubs.slice().sort((a, b) => distance(a, n) - distance(b, n));
  if (distance(near[0], n) < 85) edge(n, near[Math.floor(random() * 3)]);
  if (central(n)) edge(n, near[Math.floor(random() * 60)]);
}
for (let i = 0; i < 1100; i++) {
  const a = hubs[Math.floor(random() * hubs.length)];
  const b = hubs[Math.floor(random() * hubs.length)];
  if (central(a) && central(b) && distance(a, b) < 330) edge(a, b);
}

const links = document.createElementNS(NS, "path");
links.setAttribute("d", d);
links.setAttribute("fill", "none");
links.setAttribute("stroke", "rgba(128,128,128,.17)");
svg.append(links);

for (const n of nodes) {
  const dot = document.createElementNS(NS, "circle");
  dot.setAttribute("cx", n.x.toFixed(1));
  dot.setAttribute("cy", n.y.toFixed(1));
  dot.setAttribute("r", n.r);
  dot.setAttribute("fill", colors[n.kind]);
  svg.append(dot);
}
```
